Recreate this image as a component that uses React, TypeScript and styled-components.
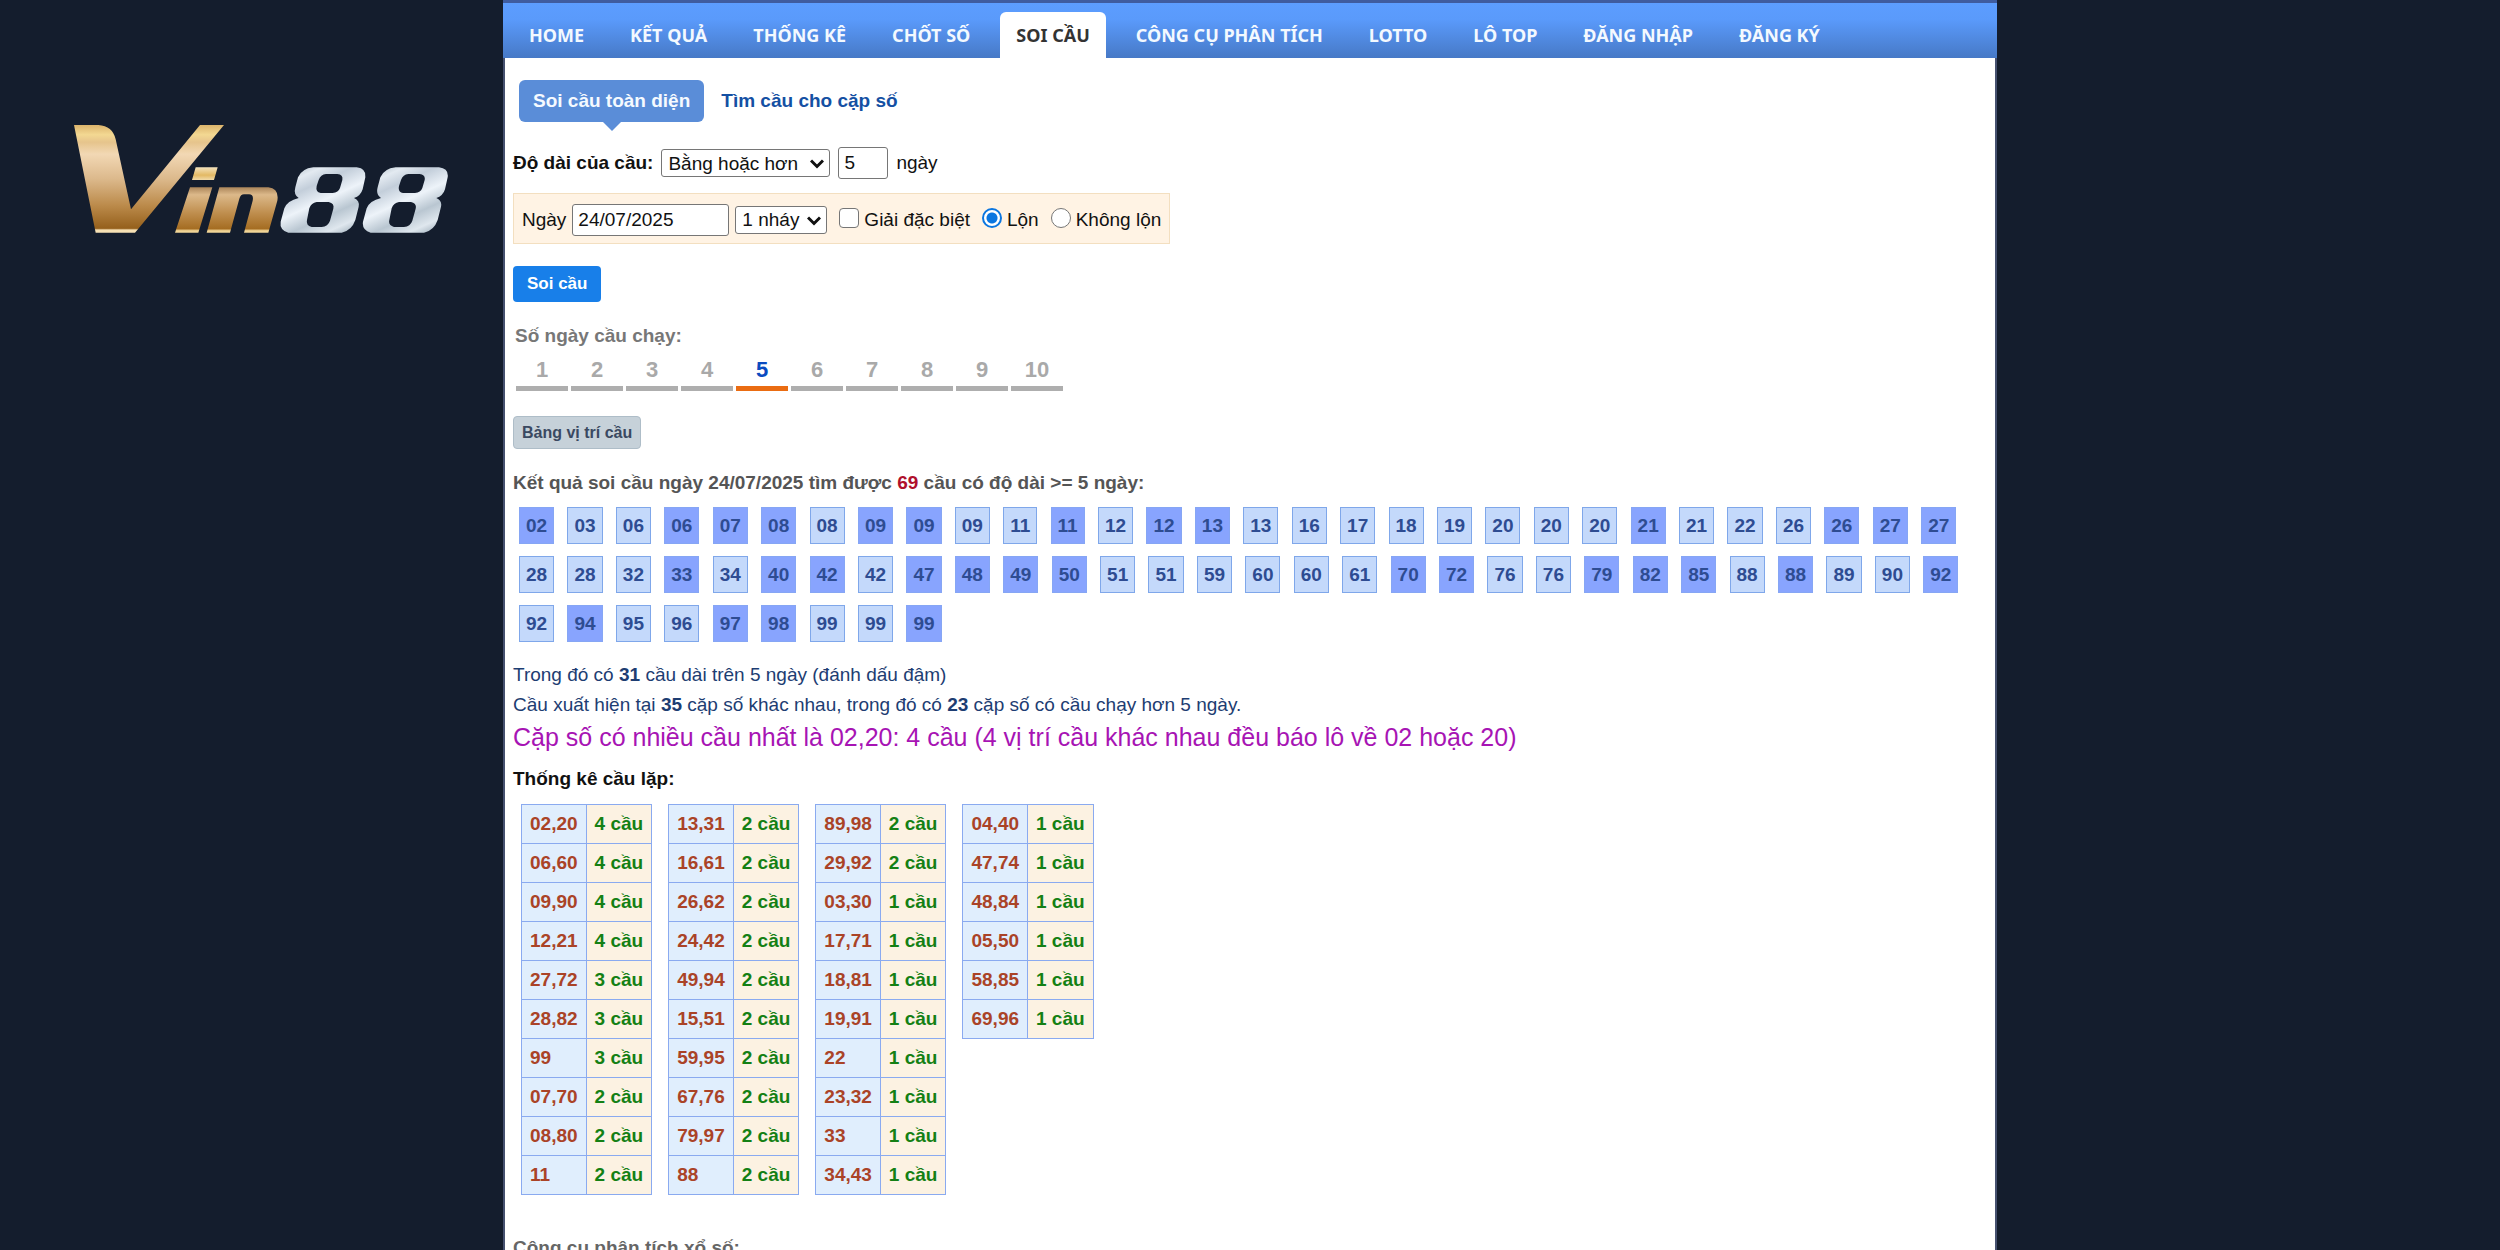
import React from "react";
import styled, { createGlobalStyle, css } from "styled-components";

const sans = `"Liberation Sans", Arial, Helvetica, sans-serif`;

const GlobalStyle = createGlobalStyle`
  *, *::before, *::after { box-sizing: border-box; }
  body {
    margin: 0;
    background: #141d2d;
    color: #111;
    font: 19px/30px ${sans};
  }
  a { text-decoration: none; }
  p, h2, h3 { margin: 0; font-size: 19px; }
`;

const Page = styled.div`
  display: grid;
  grid-template-columns: minmax(0, 1fr) minmax(0, 1494px) minmax(0, 1fr);
  height: 100vh;
  overflow: hidden;
`;

const Side = styled.aside`
  padding: 125px 55px 0 74px;
`;

const LogoSvg = styled.svg`
  display: block;
  width: 100%;
  height: auto;
`;

const Site = styled.div`
  display: flex;
  flex-direction: column;
`;

const Nav = styled.nav`
  display: flex;
  align-items: flex-end;
  gap: 14px;
  height: 58px;
  padding-left: 10px;
  border-top: 3px solid #3f5c9f;
  background: linear-gradient(#5c9dff 0%, #5a9afb 30%, #4779c6 100%);
`;

const NavLink = styled.a<{ $active?: boolean }>`
  height: 46px;
  padding: 0 16px;
  border-radius: 6px 6px 0 0;
  font: bold 18px/46px "Noto Sans", sans-serif;
  white-space: nowrap;
  color: #f3f9ff;
  ${(p) =>
    p.$active &&
    css`
      background: #fff;
      color: #333;
    `}
`;

const Main = styled.main`
  flex: 1;
  padding: 22px 8px 0;
  border: solid #46516f;
  border-width: 0 2px;
  background: #fff;
`;

const SubTabs = styled.div`
  display: flex;
  gap: 3px;
  padding-left: 6px;
`;

const SubTab = styled.a<{ $active?: boolean }>`
  position: relative;
  padding: 0 14px;
  border-radius: 6px;
  font-weight: bold;
  line-height: 42px;
  color: #1450a3;
  ${(p) =>
    p.$active &&
    css`
      background: #5a8dd8;
      color: #f5faff;
      &::after {
        content: "";
        position: absolute;
        top: 100%;
        left: 50%;
        margin-left: -9px;
        border: 9px solid transparent;
        border-top-color: #5a8dd8;
        border-bottom: 0;
      }
    `}
`;

const FieldRow = styled.div`
  display: flex;
  align-items: center;
  gap: 8px;
  margin-top: 25px;
`;

const FormBox = styled.div`
  display: flex;
  align-items: center;
  gap: 6px;
  width: fit-content;
  height: 51px;
  margin-top: 14px;
  padding: 2px 8px 0;
  border: 1px solid #f3dfc0;
  background: #fff3e4;
`;

const BoldLabel = styled.label`
  font-weight: bold;
`;

const TextInput = styled.input<{ $width: number }>`
  width: ${(p) => p.$width}px;
  height: 32px;
  padding: 0 5px;
  border: 1px solid #767676;
  border-radius: 3px;
  background: #fff;
  font: 19px ${sans};
  color: #111;
`;

const SelectWrap = styled.span`
  position: relative;
  display: inline-flex;
  svg {
    position: absolute;
    right: 6px;
    top: 10px;
    pointer-events: none;
  }
`;

const SelectBox = styled.select<{ $width: number }>`
  appearance: none;
  width: ${(p) => p.$width}px;
  height: 28px;
  padding: 0 6px;
  border: 1px solid #767676;
  border-radius: 3px;
  background: #fff;
  font: 19px ${sans};
  color: #111;
`;

const Choice = styled.label`
  display: flex;
  align-items: center;
  gap: 5px;
  margin-left: 6px;
`;

const Check = styled.input`
  appearance: none;
  width: 20px;
  height: 20px;
  margin: 0 0 4px;
  border: 1px solid #767676;
  border-radius: 4px;
  background: #fff;
`;

const Radio = styled(Check)`
  border-radius: 50%;
  &:checked {
    border: 2px solid #0b76e0;
    background: radial-gradient(circle, #0b76e0 5px, #fff 6px);
  }
`;

const PrimaryButton = styled.button`
  display: block;
  height: 36px;
  margin-top: 22px;
  padding: 0 14px;
  border: 0;
  border-radius: 4px;
  background: #187fe9;
  font: bold 17px ${sans};
  color: #fff;
`;

const GrayTitle = styled.h3`
  margin-top: 19px;
  padding-left: 2px;
  color: #777;
`;

const Days = styled.div`
  display: flex;
  gap: 3px;
  margin-top: 3px;
  padding-left: 3px;
`;

const Day = styled.a<{ $active: boolean }>`
  width: 52px;
  border-bottom: 5px solid ${(p) => (p.$active ? "#ea6c12" : "#aeaeae")};
  font-size: 22px;
  font-weight: bold;
  line-height: 32px;
  text-align: center;
  color: ${(p) => (p.$active ? "#0b4bc0" : "#a9a9a9")};
`;

const SmallButton = styled.button`
  display: block;
  height: 33px;
  margin-top: 25px;
  padding: 0 8px;
  border: 1px solid #aebdc8;
  border-radius: 4px;
  background: #c6d1d9;
  font: bold 16px ${sans};
  color: #3a4961;
`;

const ResultTitle = styled.h2`
  margin-top: 19px;
  color: #555;
  b { color: #b0102c; }
`;

const Chips = styled.div`
  margin: 3px 0 0 2px;
  font-weight: bold;
  line-height: 35px;
`;

const Chip = styled.span<{ $strong: boolean }>`
  display: inline-block;
  vertical-align: top;
  margin: 6px 4px;
  padding: 0 6px;
  border: 1px solid ${(p) => (p.$strong ? "#86a6f4" : "#7fa7ea")};
  background: ${(p) => (p.$strong ? "#88a4fe" : "#c4d9fb")};
  color: #2e4c92;
`;

const Summary = styled.div`
  margin-top: 12px;
  color: #1d3d72;
`;

const Highlight = styled.p`
  font-size: 25px;
  line-height: 34px;
  color: #a714b4;
`;

const StatTitle = styled.h3`
  margin-top: 10px;
`;

const Tables = styled.div`
  display: flex;
  align-items: flex-start;
  gap: 16px;
  margin: 10px 0 0 8px;
`;

const StatTable = styled.table`
  border-collapse: collapse;
  font-weight: bold;
  td {
    height: 39px;
    padding: 0 8px;
    border: 1px solid #8aaaf0;
    background: #fcf2e2;
    color: #148014;
  }
  td:first-child {
    background: #e0eefd;
    color: #aa4327;
  }
`;

const FooterTitle = styled.h3`
  margin-top: 38px;
  color: #666;
`;

const navItems = [
  "HOME", "KẾT QUẢ", "THỐNG KÊ", "CHỐT SỐ", "SOI CẦU",
  "CÔNG CỤ PHÂN TÍCH", "LOTTO", "LÔ TOP", "ĐĂNG NHẬP", "ĐĂNG KÝ",
];

/* An asterisk marks a run longer than the chosen number of days. */
const chips = (
  "02* 03 06 06* 07* 08* 08 09* 09* 09 11 11* 12 12* 13* 13 16 17 18 19 20 20 20 21* 21 22 26 26* 27* 27* " +
  "28 28 32 33* 34 40* 42* 42 47* 48* 49* 50* 51 51 59 60 60 61 70* 72* 76 76 79* 82* 85* 88 88* 89 90 92* " +
  "92 94* 95 96 97* 98* 99 99 99*"
).split(" ");

const stats: [string, number][][] = [
  [["02,20", 4], ["06,60", 4], ["09,90", 4], ["12,21", 4], ["27,72", 3], ["28,82", 3], ["99", 3], ["07,70", 2], ["08,80", 2], ["11", 2]],
  [["13,31", 2], ["16,61", 2], ["26,62", 2], ["24,42", 2], ["49,94", 2], ["15,51", 2], ["59,95", 2], ["67,76", 2], ["79,97", 2], ["88", 2]],
  [["89,98", 2], ["29,92", 2], ["03,30", 1], ["17,71", 1], ["18,81", 1], ["19,91", 1], ["22", 1], ["23,32", 1], ["33", 1], ["34,43", 1]],
  [["04,40", 1], ["47,74", 1], ["48,84", 1], ["05,50", 1], ["58,85", 1], ["69,96", 1]],
];

const EIGHT =
  "M790 202H920Q950 206 946 232L938 268Q932 288 912 294Q930 302 926 320L916 360Q905 392 875 398H715Q688 390 692 365L703 325Q712 302 746 294Q730 284 736 262L744 232Q755 206 790 202Z" +
  "M828 222Q812 224 806 240L800 258Q796 276 812 279H848Q865 278 870 264L877 240Q880 224 862 222Z" +
  "M800 306Q784 308 778 325L771 360Q767 376 785 381H815Q834 380 840 362L850 326Q854 310 836 306Z";

function Logo() {
  return (
    <LogoSvg viewBox="72 75 1122 324" role="img" aria-label="Vin88">
      <defs>
        <linearGradient id="gold" gradientUnits="userSpaceOnUse" x1="0" y1="75" x2="0" y2="398">
          <stop offset="0" stopColor="#dcb46c" />
          <stop offset="0.09" stopColor="#f3d892" />
          <stop offset="0.16" stopColor="#e6c48c" />
          <stop offset="0.27" stopColor="#f2d8b4" />
          <stop offset="0.5" stopColor="#dcb98c" />
          <stop offset="0.75" stopColor="#bb8a4a" />
          <stop offset="0.96" stopColor="#95601c" />
          <stop offset="0.975" stopColor="#f6e0b4" />
        </linearGradient>
        <linearGradient id="goldSmall" gradientUnits="userSpaceOnUse" x1="0" y1="202" x2="0" y2="398">
          <stop offset="0" stopColor="#f4e2bc" />
          <stop offset="0.12" stopColor="#e3b964" />
          <stop offset="0.2" stopColor="#f2dcae" />
          <stop offset="0.3" stopColor="#a98358" />
          <stop offset="0.42" stopColor="#dcb98a" />
          <stop offset="0.7" stopColor="#bf8e4e" />
          <stop offset="0.94" stopColor="#a56d22" />
          <stop offset="0.97" stopColor="#f0d496" />
        </linearGradient>
        <linearGradient id="silver" gradientUnits="userSpaceOnUse" x1="760" y1="190" x2="860" y2="410">
          <stop offset="0" stopColor="#b8c4ce" />
          <stop offset="0.14" stopColor="#e3eaf1" />
          <stop offset="0.3" stopColor="#c3ceda" />
          <stop offset="0.52" stopColor="#edf3f9" />
          <stop offset="0.72" stopColor="#b9c6d1" />
          <stop offset="0.9" stopColor="#dfe7ee" />
          <stop offset="1" stopColor="#b3c0cb" />
        </linearGradient>
      </defs>
      <path fill="url(#gold)" d="M72 75H145Q188 78 197 118L243 328L450 75H522L255 398H137Z" />
      <path
        fill="url(#goldSmall)"
        d="M437 202H503L492 240H426ZM420 262H487L445 398H375ZM508 262H655Q688 266 682 302L655 398H582L608 302Q612 283 597 283H582Q572 283 568 296L540 398H470Z"
      />
      <path fill="url(#silver)" fillRule="evenodd" d={EIGHT} />
      <path fill="url(#silver)" fillRule="evenodd" d={EIGHT} transform="translate(247 0)" />
    </LogoSvg>
  );
}

function Select({ id, label, width, options }: { id: string; label: string; width: number; options: string[] }) {
  return (
    <SelectWrap>
      <SelectBox id={id} aria-label={label} $width={width}>
        {options.map((o) => (
          <option key={o}>{o}</option>
        ))}
      </SelectBox>
      <svg width="14" height="10" viewBox="0 0 14 10" fill="none" stroke="#111" strokeWidth="3">
        <path d="M1 1.5L7 7.5L13 1.5" />
      </svg>
    </SelectWrap>
  );
}

export default function App() {
  return (
    <>
      <GlobalStyle />
      <Page>
        <Side>
          <Logo />
        </Side>
        <Site>
          <Nav>
            {navItems.map((item) => (
              <NavLink key={item} href="#" $active={item === "SOI CẦU"}>
                {item}
              </NavLink>
            ))}
          </Nav>
          <Main>
            <SubTabs>
              <SubTab href="#" $active>Soi cầu toàn diện</SubTab>
              <SubTab href="#">Tìm cầu cho cặp số</SubTab>
            </SubTabs>

            <FieldRow>
              <BoldLabel htmlFor="compare">Độ dài của cầu:</BoldLabel>
              <Select id="compare" label="Độ dài của cầu" width={169} options={["Bằng hoặc hơn", "Bằng"]} />
              <TextInput id="length" aria-label="Số ngày" $width={50} defaultValue="5" />
              <label htmlFor="length">ngày</label>
            </FieldRow>

            <FormBox>
              <label htmlFor="date">Ngày</label>
              <TextInput id="date" $width={157} defaultValue="24/07/2025" />
              <Select id="hits" label="Số nháy" width={92} options={["1 nháy", "2 nháy"]} />
              <Choice>
                <Check type="checkbox" />
                Giải đặc biệt
              </Choice>
              <Choice>
                <Radio type="radio" name="flip" defaultChecked />
                Lộn
              </Choice>
              <Choice>
                <Radio type="radio" name="flip" />
                Không lộn
              </Choice>
            </FormBox>

            <PrimaryButton type="button">Soi cầu</PrimaryButton>

            <GrayTitle>Số ngày cầu chạy:</GrayTitle>
            <Days>
              {Array.from({ length: 10 }, (_, i) => i + 1).map((n) => (
                <Day key={n} href="#" $active={n === 5}>{n}</Day>
              ))}
            </Days>

            <SmallButton type="button">Bảng vị trí cầu</SmallButton>

            <ResultTitle>
              Kết quả soi cầu ngày 24/07/2025 tìm được <b>69</b> cầu có độ dài &gt;= 5 ngày:
            </ResultTitle>
            <Chips>
              {chips.map((c, i) => (
                <React.Fragment key={i}>
                  <Chip $strong={c.endsWith("*")}>{c.slice(0, 2)}</Chip>{" "}
                </React.Fragment>
              ))}
            </Chips>

            <Summary>
              <p>Trong đó có <b>31</b> cầu dài trên 5 ngày (đánh dấu đậm)</p>
              <p>
                Cầu xuất hiện tại <b>35</b> cặp số khác nhau, trong đó có <b>23</b> cặp số có cầu chạy hơn 5 ngày.
              </p>
            </Summary>
            <Highlight>
              Cặp số có nhiều cầu nhất là 02,20: 4 cầu (4 vị trí cầu khác nhau đều báo lô về 02 hoặc 20)
            </Highlight>

            <StatTitle>Thống kê cầu lặp:</StatTitle>
            <Tables>
              {stats.map((rows, i) => (
                <StatTable key={i}>
                  <tbody>
                    {rows.map(([pair, count]) => (
                      <tr key={pair}>
                        <td>{pair}</td>
                        <td>{count} cầu</td>
                      </tr>
                    ))}
                  </tbody>
                </StatTable>
              ))}
            </Tables>

            <FooterTitle>Công cụ phân tích xổ số:</FooterTitle>
          </Main>
        </Site>
      </Page>
    </>
  );
}
